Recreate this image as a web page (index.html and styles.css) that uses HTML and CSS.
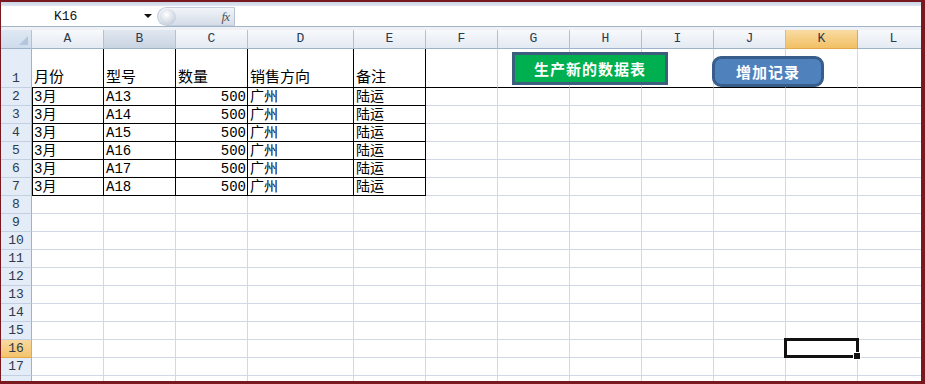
FILE: index.html
```html
<!DOCTYPE html>
<html lang="zh-CN">
<head>
    <meta charset="UTF-8">
    <title>Sheet1</title>
    <link rel="stylesheet" href="styles.css">
</head>
<body>
    <div class="window">
        <div class="top-edge"></div>
        <div class="formula-bar">
            <div class="name-box">
                <span class="cell-ref">K16</span>
                <span class="drop"></span>
            </div>
            <div class="fx-pill">
                <span class="knob"></span>
                <span class="fx">fx</span>
            </div>
            <div class="formula-input"></div>
        </div>
        <div class="bar-gap"></div>

        <div class="sheet">
            <table class="grid">
                <thead>
                    <tr>
                        <th class="corner"><span class="corner-tri"></span></th>
                        <th class="col">A</th>
                        <th class="col hover">B</th>
                        <th class="col">C</th>
                        <th class="col wide">D</th>
                        <th class="col">E</th>
                        <th class="col">F</th>
                        <th class="col">G</th>
                        <th class="col">H</th>
                        <th class="col">I</th>
                        <th class="col">J</th>
                        <th class="col active">K</th>
                        <th class="col">L</th>
                    </tr>
                </thead>
                <tbody>
                    <tr class="title-row">
                        <th class="rh">1</th>
                        <td class="dr">月份</td><td class="dr">型号</td><td class="dr">数量</td><td class="dr">销售方向</td><td class="dr">备注</td>
                        <td></td><td></td><td></td><td></td><td></td><td></td><td></td>
                    </tr>
                    <tr>
                        <th class="rh">2</th>
                        <td class="d first">3月</td><td class="d">A13</td><td class="d num">500</td><td class="d">广州</td><td class="d">陆运</td>
                        <td></td><td></td><td></td><td></td><td></td><td></td><td></td>
                    </tr>
                    <tr>
                        <th class="rh">3</th>
                        <td class="d first">3月</td><td class="d">A14</td><td class="d num">500</td><td class="d">广州</td><td class="d">陆运</td>
                        <td></td><td></td><td></td><td></td><td></td><td></td><td></td>
                    </tr>
                    <tr>
                        <th class="rh">4</th>
                        <td class="d first">3月</td><td class="d">A15</td><td class="d num">500</td><td class="d">广州</td><td class="d">陆运</td>
                        <td></td><td></td><td></td><td></td><td></td><td></td><td></td>
                    </tr>
                    <tr>
                        <th class="rh">5</th>
                        <td class="d first">3月</td><td class="d">A16</td><td class="d num">500</td><td class="d">广州</td><td class="d">陆运</td>
                        <td></td><td></td><td></td><td></td><td></td><td></td><td></td>
                    </tr>
                    <tr>
                        <th class="rh">6</th>
                        <td class="d first">3月</td><td class="d">A17</td><td class="d num">500</td><td class="d">广州</td><td class="d">陆运</td>
                        <td></td><td></td><td></td><td></td><td></td><td></td><td></td>
                    </tr>
                    <tr>
                        <th class="rh">7</th>
                        <td class="d first">3月</td><td class="d">A18</td><td class="d num">500</td><td class="d">广州</td><td class="d">陆运</td>
                        <td></td><td></td><td></td><td></td><td></td><td></td><td></td>
                    </tr>
                    <tr><th class="rh">8</th><td></td><td></td><td></td><td></td><td></td><td></td><td></td><td></td><td></td><td></td><td></td><td></td></tr>
                    <tr><th class="rh">9</th><td></td><td></td><td></td><td></td><td></td><td></td><td></td><td></td><td></td><td></td><td></td><td></td></tr>
                    <tr><th class="rh">10</th><td></td><td></td><td></td><td></td><td></td><td></td><td></td><td></td><td></td><td></td><td></td><td></td></tr>
                    <tr><th class="rh">11</th><td></td><td></td><td></td><td></td><td></td><td></td><td></td><td></td><td></td><td></td><td></td><td></td></tr>
                    <tr><th class="rh">12</th><td></td><td></td><td></td><td></td><td></td><td></td><td></td><td></td><td></td><td></td><td></td><td></td></tr>
                    <tr><th class="rh">13</th><td></td><td></td><td></td><td></td><td></td><td></td><td></td><td></td><td></td><td></td><td></td><td></td></tr>
                    <tr><th class="rh">14</th><td></td><td></td><td></td><td></td><td></td><td></td><td></td><td></td><td></td><td></td><td></td><td></td></tr>
                    <tr><th class="rh">15</th><td></td><td></td><td></td><td></td><td></td><td></td><td></td><td></td><td></td><td></td><td></td><td></td></tr>
                    <tr><th class="rh active">16</th><td></td><td></td><td></td><td></td><td></td><td></td><td></td><td></td><td></td><td></td><td class="sel"></td><td></td></tr>
                    <tr><th class="rh">17</th><td></td><td></td><td></td><td></td><td></td><td></td><td></td><td></td><td></td><td></td><td></td><td></td></tr>
                    <tr class="last-row"><th class="rh"></th><td></td><td></td><td></td><td></td><td></td><td></td><td></td><td></td><td></td><td></td><td></td><td></td></tr>
                </tbody>
            </table>

            <!-- floating shapes on the sheet -->
            <div class="btn btn-green">生产新的数据表</div>
            <div class="btn btn-blue">增加记录</div>
        </div>
    </div>
</body>
</html>
```

FILE: styles.css
```css
* {
    box-sizing: border-box;
}
body {
    margin: 0;
    background: #fff;
    font-family: "Liberation Mono", "Noto Sans CJK SC", monospace;
}
.window {
    width: 925px;
    height: 384px;
    border-style: solid;
    border-color: #7a1820;
    border-width: 2px 4px 3px 1px;
    overflow: hidden;
    display: flex;
    flex-direction: column;
}
.top-edge {
    height: 4px;
    background: linear-gradient(#c9d6e6, #dfe7f1);
}
.formula-bar {
    height: 21px;
    display: flex;
    background: #fff;
    border-bottom: 1px solid #a3b4c9;
}
.name-box {
    width: 154px;
    position: relative;
    display: flex;
    align-items: center;
}
.cell-ref {
    margin-left: 53px;
    font-size: 13px;
    color: #111;
}
.drop {
    position: absolute;
    left: 143px;
    top: 8px;
    border-left: 4px solid transparent;
    border-right: 4px solid transparent;
    border-top: 4px solid #111;
}
.fx-pill {
    width: 78px;
    margin: 1px 0 0 2px;
    border-radius: 10px 0 0 10px;
    background: linear-gradient(#f1f4f8, #d5dde8);
    border: 1px solid #c3cedb;
    border-right: 1px solid #b5c2d2;
    position: relative;
}
.knob {
    position: absolute;
    left: 2px;
    top: 1px;
    width: 16px;
    height: 16px;
    border-radius: 50%;
    background: radial-gradient(circle at 40% 35%, #ffffff, #c9d3df 70%, #a9b7c8);
}
.fx {
    position: absolute;
    right: 5px;
    top: 1px;
    font-family: "Liberation Serif", serif;
    font-style: italic;
    font-size: 13px;
    color: #555;
    letter-spacing: -1px;
}
.formula-input {
    flex: 1;
    background: #fff;
}
.bar-gap {
    height: 3px;
    background: #eef2f7;
}
.sheet {
    position: relative;
    flex: 1;
    overflow: hidden;
}
.grid {
    table-layout: fixed;
    border-collapse: separate;
    border-spacing: 0;
    width: 929px;
    font-size: 14px;
    color: #000;
}
.grid th,
.grid td {
    height: 18px;
    padding: 0 2px;
    border-right: 1px solid #d0d7e5;
    border-bottom: 1px solid #d0d7e5;
    white-space: nowrap;
    overflow: hidden;
    vertical-align: bottom;
    line-height: 16px;
    color: #000;
}
.grid thead th {
    height: 19px;
    width: 72px;
    font-weight: normal;
    font-size: 13px;
    color: #2c3a4c;
    vertical-align: middle;
    background: linear-gradient(#f7f9fc, #e4eaf3);
    border-right-color: #b1c2d6;
    border-bottom-color: #9eb2c8;
}
.grid thead th.corner {
    width: 31px;
    position: relative;
    background: linear-gradient(#dfe8f3, #cfdcec);
}
.corner-tri {
    position: absolute;
    right: 3px;
    bottom: 3px;
    border-left: 9px solid transparent;
    border-bottom: 9px solid #b3c6dd;
}
.grid thead th.wide {
    width: 106px;
}
.grid thead th.hover {
    background: linear-gradient(#e1e7f0, #c9d4e2);
}
.grid thead th.active {
    background: linear-gradient(#f9dba3, #f2c065);
    border-right-color: #e2a84a;
    border-bottom-color: #e2a84a;
}
.grid th.rh {
    font-weight: normal;
    font-size: 13px;
    color: #2c3a4c;
    text-align: center;
    background: #e4ecf7;
    border-right-color: #9eb2c8;
    border-bottom-color: #c2d0e2;
}
.grid th.rh.active {
    background: linear-gradient(#f9d9a0, #f4c46c);
    border-bottom-color: #e2a84a;
}
.title-row th,
.title-row td {
    height: 39px;
    border-bottom-color: #000;
}
.grid td.dr {
    border-right-color: #000;
    font-size: 15px;
}
.grid td.d {
    border-right-color: #000;
    border-bottom-color: #000;
}
.grid td.first {
    box-shadow: inset 1px 0 0 #000;
}
.grid td.num {
    text-align: right;
    padding-right: 1px;
}
.grid td.sel {
    position: relative;
    overflow: visible;
}
.grid td.sel::after {
    content: "";
    position: absolute;
    left: -2px;
    top: -2px;
    right: -2px;
    bottom: -1px;
    border: 3px solid #111;
}
.grid td.sel::before {
    content: "";
    position: absolute;
    right: -4px;
    bottom: -3px;
    width: 6px;
    height: 6px;
    background: #111;
    border: 1px solid #fff;
    z-index: 1;
}
.btn {
    position: absolute;
    display: flex;
    align-items: center;
    justify-content: center;
    color: #fff;
    font-family: "Noto Sans CJK SC", sans-serif;
    font-weight: bold;
    font-size: 15px;
    letter-spacing: 1px;
}
.btn-green {
    left: 511px;
    top: 22px;
    width: 156px;
    height: 33px;
    background: #00b050;
    border: 3px solid #3d5f7e;
}
.btn-blue {
    left: 711px;
    top: 26px;
    width: 112px;
    height: 31px;
    background: #4f81bd;
    border: 3px solid #385d8a;
    border-radius: 9px;
}
```
